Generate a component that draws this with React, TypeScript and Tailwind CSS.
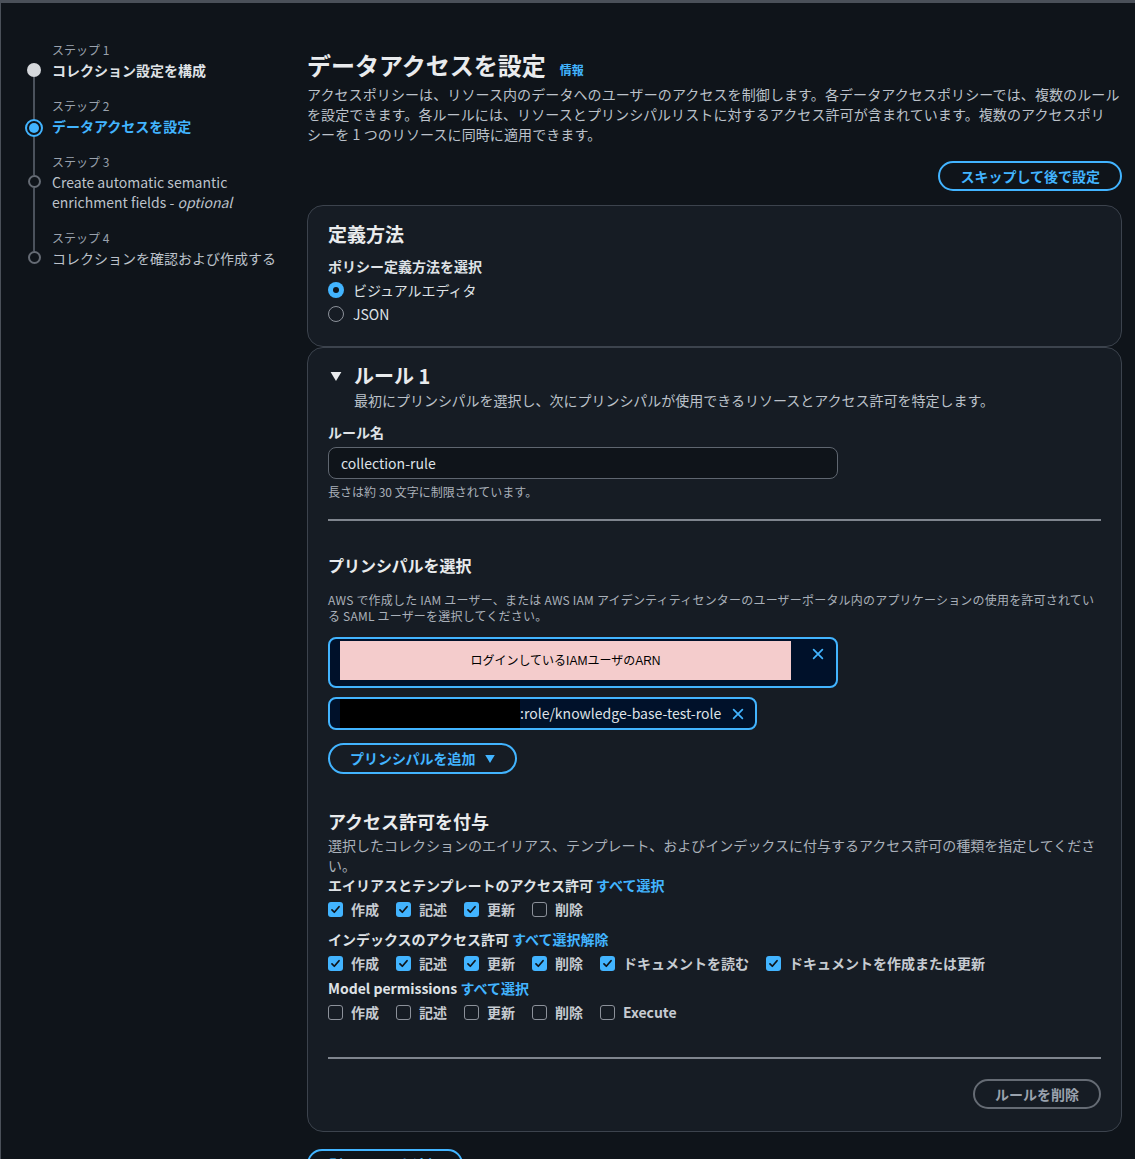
import React from 'react';

const steps = [
  { label: 'ステップ 1', title: 'コレクション設定を構成', state: 'done' },
  { label: 'ステップ 2', title: 'データアクセスを設定', state: 'current' },
  { label: 'ステップ 3', title: 'Create automatic semantic enrichment fields', optional: true, state: 'todo' },
  { label: 'ステップ 4', title: 'コレクションを確認および作成する', state: 'todo' },
];

const aliasPerms = [
  { name: '作成', checked: true },
  { name: '記述', checked: true },
  { name: '更新', checked: true },
  { name: '削除', checked: false },
];

const indexPerms = [
  { name: '作成', checked: true },
  { name: '記述', checked: true },
  { name: '更新', checked: true },
  { name: '削除', checked: true },
  { name: 'ドキュメントを読む', checked: true },
  { name: 'ドキュメントを作成または更新', checked: true },
];

const modelPerms = [
  { name: '作成', checked: false },
  { name: '記述', checked: false },
  { name: '更新', checked: false },
  { name: '削除', checked: false },
  { name: 'Execute', checked: false },
];

function StepDot({ state }: { state: string }) {
  if (state === 'done') return <span className="h-[14px] w-[14px] shrink-0 rounded-full bg-[#d5d8dc]" />;
  if (state === 'current')
    return (
      <span className="flex h-[18px] w-[18px] shrink-0 items-center justify-center rounded-full border-2 border-[#42b4ff]">
        <span className="h-[10px] w-[10px] rounded-full bg-[#42b4ff]" />
      </span>
    );
  return <span className="h-[13px] w-[13px] shrink-0 rounded-full border-2 border-[#656b74]" />;
}

function CloseIcon({ className = '' }: { className?: string }) {
  return (
    <svg viewBox="0 0 16 16" className={className} fill="none" stroke="#42b4ff" strokeWidth="2" strokeLinecap="round">
      <path d="M3 3l10 10M13 3L3 13" />
    </svg>
  );
}

function Checkbox({ checked }: { checked: boolean }) {
  if (checked)
    return (
      <span className="flex h-[15px] w-[15px] shrink-0 items-center justify-center rounded-[3px] bg-[#42b4ff]">
        <svg viewBox="0 0 14 14" className="h-[11px] w-[11px]" fill="none" stroke="#0f141a" strokeWidth="2.2" strokeLinecap="round" strokeLinejoin="round">
          <path d="M2.5 7.5l3 3 6-7" />
        </svg>
      </span>
    );
  return <span className="h-[15px] w-[15px] shrink-0 rounded-[3px] border-[1.5px] border-[#8c919a]" />;
}

function PermRow({ items }: { items: { name: string; checked: boolean }[] }) {
  return (
    <div className="mt-[2px] flex h-6 items-center gap-x-[17px]">
      {items.map((p) => (
        <label key={p.name} className="flex items-center gap-[8px] text-[14px] font-bold text-[#c6cbd1]">
          <Checkbox checked={p.checked} />
          <span>{p.name}</span>
        </label>
      ))}
    </div>
  );
}

export default function App() {
  return (
    <div className="flex h-[1159px] w-[1135px] overflow-hidden border-l border-t-[3px] border-[#4a5059] bg-[#0f141a] font-['Noto_Sans_CJK_JP','Noto_Sans',sans-serif] text-[#c6cbd1]">
      {/* Side navigation */}
      <nav className="w-[306px] shrink-0 pl-[24px] pt-[37px]">
        {steps.map((s, i) => (
          <div key={s.label} className="grid grid-cols-[18px_1fr] gap-x-[9px]">
            <div className="flex justify-center">
              {i > 0 && <span className="w-[2px] bg-[#4b525c]" />}
            </div>
            <div className="h-5 text-[12px] leading-5 text-[#9aa2ad]">{s.label}</div>
            <div className="flex flex-col items-center">
              <span className={i > 0 ? 'h-[3px] w-[2px] bg-[#4b525c]' : 'h-[3px]'} />
              <StepDot state={s.state} />
              {i < steps.length - 1 && <span className="w-[2px] flex-1 bg-[#4b525c]" />}
            </div>
            <div
              className={
                'pb-4 text-[14px] leading-5 ' +
                (s.state === 'done'
                  ? 'font-bold text-[#dfe2e6]'
                  : s.state === 'current'
                    ? 'font-bold text-[#42b4ff]'
                    : 'text-[#bcc2ca]')
              }
            >
              {s.state === 'todo' && s.optional ? (
                <span className="block w-[200px]">
                  {s.title} - <i>optional</i>
                </span>
              ) : (
                s.title
              )}
            </div>
          </div>
        ))}
      </nav>

      {/* Main content */}
      <main className="w-[815px] shrink-0 pt-[46px]">
        <div className="flex items-baseline">
          <h1 className="text-[24px] font-bold leading-8 text-[#e9ebed]">データアクセスを設定</h1>
          <a className="ml-[14px] text-[12px] font-bold text-[#42b4ff]">情報</a>
        </div>
        <p className="mt-[3px] text-[14px] leading-5 tracking-[0.1px] text-[#bcc2ca]">
          アクセスポリシーは、リソース内のデータへのユーザーのアクセスを制御します。各データアクセスポリシーでは、複数のルールを設定できます。各ルールには、リソースとプリンシパルリストに対するアクセス許可が含まれています。複数のアクセスポリ
          <br />
          シーを 1 つのリソースに同時に適用できます。
        </p>
        <div className="mt-[17px] flex justify-end">
          <button className="h-[30px] rounded-full border-2 border-[#42b4ff] px-[20px] text-[14px] font-bold text-[#42b4ff]">
            スキップして後で設定
          </button>
        </div>

        {/* Definition method */}
        <section className="mt-[14px] rounded-2xl border border-[#3c434d] bg-[#161c24] px-5 pb-[20px] pt-[16px]">
          <h2 className="text-[19px] font-bold leading-6 text-[#e9ebed]">定義方法</h2>
          <div className="mt-[10px] text-[14px] font-bold leading-5 text-[#dfe2e6]">ポリシー定義方法を選択</div>
          <div className="mt-[2px]">
            <label className="flex h-6 items-center gap-[9px] text-[14px] text-[#dfe2e6]">
              <span className="flex h-4 w-4 items-center justify-center rounded-full bg-[#42b4ff]">
                <span className="h-[6px] w-[6px] rounded-full bg-[#0f141a]" />
              </span>
              ビジュアルエディタ
            </label>
            <label className="flex h-6 items-center gap-[9px] text-[14px] text-[#dfe2e6]">
              <span className="h-4 w-4 rounded-full border-[1.5px] border-[#8c919a]" />
              JSON
            </label>
          </div>
        </section>

        {/* Rule 1 */}
        <section className="rounded-2xl border border-[#3c434d] bg-[#161c24] px-5 pb-[22px] pt-[14px]">
          <div className="flex items-center gap-[12px]">
            <svg viewBox="0 0 12 10" className="ml-[2px] h-[9px] w-[12px]" fill="#e9ebed">
              <path d="M0 0h12L6 10z" />
            </svg>
            <h2 className="text-[20px] font-bold leading-7 text-[#e9ebed]">ルール 1</h2>
          </div>
          <p className="pl-[26px] text-[14px] leading-5 text-[#bcc2ca]">
            最初にプリンシパルを選択し、次にプリンシパルが使用できるリソースとアクセス許可を特定します。
          </p>

          <div className="mt-3 text-[14px] font-bold leading-5 text-[#dfe2e6]">ルール名</div>
          <div className="mt-[5px] flex h-[32px] w-[510px] items-center rounded-lg border border-[#5f6670] bg-[#0f141a] px-3 text-[14px] text-[#dfe2e6]">
            collection-rule
          </div>
          <div className="mt-[5px] text-[12px] leading-4 text-[#aab1ba]">長さは約 30 文字に制限されています。</div>

          <hr className="mt-[19px] border-t-2 border-[#7f858e]" />

          {/* Principals */}
          <h3 className="mt-[33px] text-[16px] font-bold leading-[22px] text-[#e9ebed]">プリンシパルを選択</h3>
          <p className="mt-4 text-[12px] leading-4 tracking-[0.2px] text-[#aab1ba]">
            AWS で作成した IAM ユーザー、または AWS IAM アイデンティティセンターのユーザーポータル内のアプリケーションの使用を許可されている SAML ユーザーを選択してください。
          </p>

          <div className="mt-[13px] flex h-[51px] w-[510px] items-start rounded-lg border-2 border-[#42b4ff] bg-[#00112a] pl-[10px] pt-[2px]">
            <div className="flex h-[39px] w-[451px] items-center justify-center bg-[#f4cccc] font-['Liberation_Sans','Noto_Sans_CJK_JP',sans-serif] text-[12px] text-black">
              ログインしているIAMユーザのARN
            </div>
            <CloseIcon className="ml-[20px] mt-[6px] h-[14px] w-[14px]" />
          </div>

          <div className="mt-[9px] flex h-[33px] w-[429px] items-center rounded-lg border-2 border-[#42b4ff] bg-[#00112a] pl-[10px]">
            <div className="h-[29px] w-[180px] bg-black" />
            <span className="text-[14px] text-[#dfe2e6]">:role/knowledge-base-test-role</span>
            <CloseIcon className="ml-[10px] h-[14px] w-[14px]" />
          </div>

          <button className="mt-[13px] flex h-[31px] items-center gap-[9px] rounded-full border-2 border-[#42b4ff] px-[20px] text-[14px] font-bold text-[#42b4ff]">
            プリンシパルを追加
            <svg viewBox="0 0 12 10" className="h-[8px] w-[10px]" fill="#42b4ff">
              <path d="M0 0h12L6 10z" />
            </svg>
          </button>

          {/* Permissions */}
          <h3 className="mt-[35px] text-[18px] font-bold leading-6 text-[#e9ebed]">アクセス許可を付与</h3>
          <p className="mt-[2px] text-[14px] leading-5 text-[#aab1ba]">
            選択したコレクションのエイリアス、テンプレート、およびインデックスに付与するアクセス許可の種類を指定してください。
          </p>

          <div className="text-[14px] font-bold leading-5 text-[#dfe2e6]">
            エイリアスとテンプレートのアクセス許可 <a className="text-[#42b4ff]">すべて選択</a>
          </div>
          <PermRow items={aliasPerms} />

          <div className="mt-[8px] text-[14px] font-bold leading-5 text-[#dfe2e6]">
            インデックスのアクセス許可 <a className="text-[#42b4ff]">すべて選択解除</a>
          </div>
          <PermRow items={indexPerms} />

          <div className="mt-[3px] text-[14px] font-bold leading-5 text-[#dfe2e6]">
            Model permissions <a className="text-[#42b4ff]">すべて選択</a>
          </div>
          <PermRow items={modelPerms} />

          <hr className="mt-[33px] border-t-2 border-[#7f858e]" />

          <div className="mt-5 flex justify-end">
            <button className="h-[30px] rounded-full border-2 border-[#656b74] px-[20px] text-[14px] font-bold text-[#9aa2ad]">
              ルールを削除
            </button>
          </div>
        </section>

        <button className="mt-[17px] h-[30px] rounded-full border-2 border-[#42b4ff] px-[20px] text-[14px] font-bold text-[#42b4ff]">
          別のルールを追加
        </button>
      </main>
    </div>
  );
}
